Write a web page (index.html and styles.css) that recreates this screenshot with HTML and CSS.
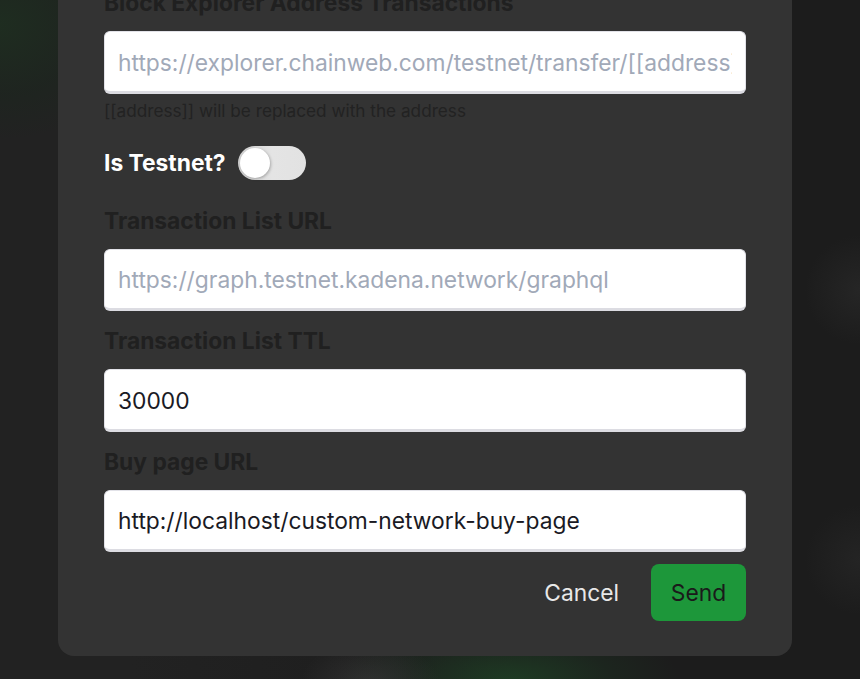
FILE: index.html
```html
<!DOCTYPE html>
<html lang="en">
<head>
<meta charset="utf-8">
<title>Network settings</title>
<link rel="stylesheet" href="styles.css">
</head>
<body>
<div class="backdrop">
  <div class="glow glow-tl"></div>
  <div class="glow glow-bottom"></div>
  <div class="glow glow-bottom-gray"></div>
  <div class="glow glow-right1"></div>
  <div class="glow glow-right2"></div>
  <div class="modal">
    <div class="field">
      <label class="label">Block Explorer Address Transactions</label>
      <input class="input" type="text" placeholder="https://explorer.chainweb.com/testnet/transfer/[[address]]">
      <div class="helper">[[address]] will be replaced with the address</div>
    </div>
    <div class="toggle-row">
      <span class="toggle-label">Is Testnet?</span>
      <span class="toggle"><span class="knob"></span></span>
    </div>
    <div class="field">
      <label class="label">Transaction List URL</label>
      <input class="input" type="text" placeholder="https://graph.testnet.kadena.network/graphql">
    </div>
    <div class="field">
      <label class="label">Transaction List TTL</label>
      <input class="input" type="text" value="30000">
    </div>
    <div class="field">
      <label class="label">Buy page URL</label>
      <input class="input" type="text" value="http://localhost/custom-network-buy-page">
    </div>
    <div class="actions">
      <button class="btn btn-cancel" type="button">Cancel</button>
      <button class="btn btn-send" type="button">Send</button>
    </div>
  </div>
</div>
</body>
</html>
```

FILE: styles.css
```css
* { box-sizing: border-box; }
html, body { margin: 0; padding: 0; }
body {
  width: 860px;
  height: 679px;
  overflow: hidden;
  background: #1c1c1c;
  font-family: Inter, "Noto Sans", sans-serif;
}
.backdrop {
  position: relative;
  width: 860px;
  height: 679px;
  overflow: hidden;
  background: linear-gradient(90deg, #222 0%, #222 15%, #1c1c1c 60%);
}
.glow {
  position: absolute;
  border-radius: 50%;
  pointer-events: none;
}
.glow-tl {
  left: -140px; top: -90px; width: 280px; height: 230px;
  background: radial-gradient(closest-side, rgba(30,46,32,0.9), rgba(28,38,30,0.6) 60%, rgba(28,28,28,0));
}
.glow-bottom {
  left: 340px; top: 615px; width: 340px; height: 130px;
  background: radial-gradient(closest-side, rgba(30,62,36,0.9), rgba(28,46,32,0.5) 60%, rgba(28,28,28,0));
}
.glow-bottom-gray {
  left: 300px; top: 640px; width: 140px; height: 90px;
  background: radial-gradient(closest-side, rgba(55,55,55,0.7), rgba(28,28,28,0));
}
.glow-right1 {
  left: 805px; top: 235px; width: 110px; height: 110px;
  background: radial-gradient(closest-side, rgba(40,40,40,0.8), rgba(28,28,28,0));
}
.glow-right2 {
  left: 805px; top: 505px; width: 110px; height: 110px;
  background: radial-gradient(closest-side, rgba(38,38,38,0.8), rgba(28,28,28,0));
}
.modal {
  position: relative;
  margin: -12px 0 0 58px;
  width: 734px;
  background: #333333;
  border-radius: 0 0 16px 16px;
  padding: 0 46px 35px;
  display: flex;
  flex-direction: column;
}
.field {
  display: flex;
  flex-direction: column;
}
.field + .field { margin-top: 15px; }
.label {
  font-size: 22.8px;
  line-height: 28px;
  font-weight: 700;
  color: #202020;
  padding-top: 1px;
  margin-bottom: 14px;
  white-space: nowrap;
}
.input {
  width: 100%;
  height: 62.5px;
  border: 1px solid #e2e2e8;
  border-bottom: 3px solid #dcdce2;
  border-radius: 6px;
  background: #fff;
  padding: 2px 13px 0;
  font-family: Inter, "Noto Sans", sans-serif;
  font-size: 22.8px;
  color: #1a1a24;
  outline: none;
}
.input::placeholder { color: #a1a9b8; }
.helper {
  margin-top: 5px;
  font-size: 17.2px;
  line-height: 24px;
  color: #222;
}
.toggle-row {
  display: flex;
  align-items: center;
  gap: 12px;
  margin-top: 23px;
  margin-bottom: 26px;
}
.toggle-label {
  font-size: 22.8px;
  font-weight: 700;
  color: #fff;
}
.toggle {
  width: 68px;
  height: 34px;
  border-radius: 17px;
  background: linear-gradient(90deg, #cfcfcf, #e4e4e4 50%, #e2e2e2);
  padding: 2px;
  display: flex;
  align-items: center;
}
.knob {
  width: 30px;
  height: 30px;
  border-radius: 50%;
  background: #fff;
  box-shadow: 1px 1px 3px rgba(0,0,0,0.25);
}
.actions {
  display: flex;
  justify-content: flex-end;
  align-items: center;
  gap: 16px;
  margin-top: 12px;
}
.btn {
  font-family: Inter, "Noto Sans", sans-serif;
  font-size: 22.8px;
  border: none;
  cursor: pointer;
}
.btn-cancel {
  background: transparent;
  color: #e8e8e8;
  padding: 0 16px;
  height: 57px;
}
.btn-send {
  background: #1d973a;
  color: #1a1a1a;
  width: 95px;
  height: 57px;
  border-radius: 8px;
}
```
